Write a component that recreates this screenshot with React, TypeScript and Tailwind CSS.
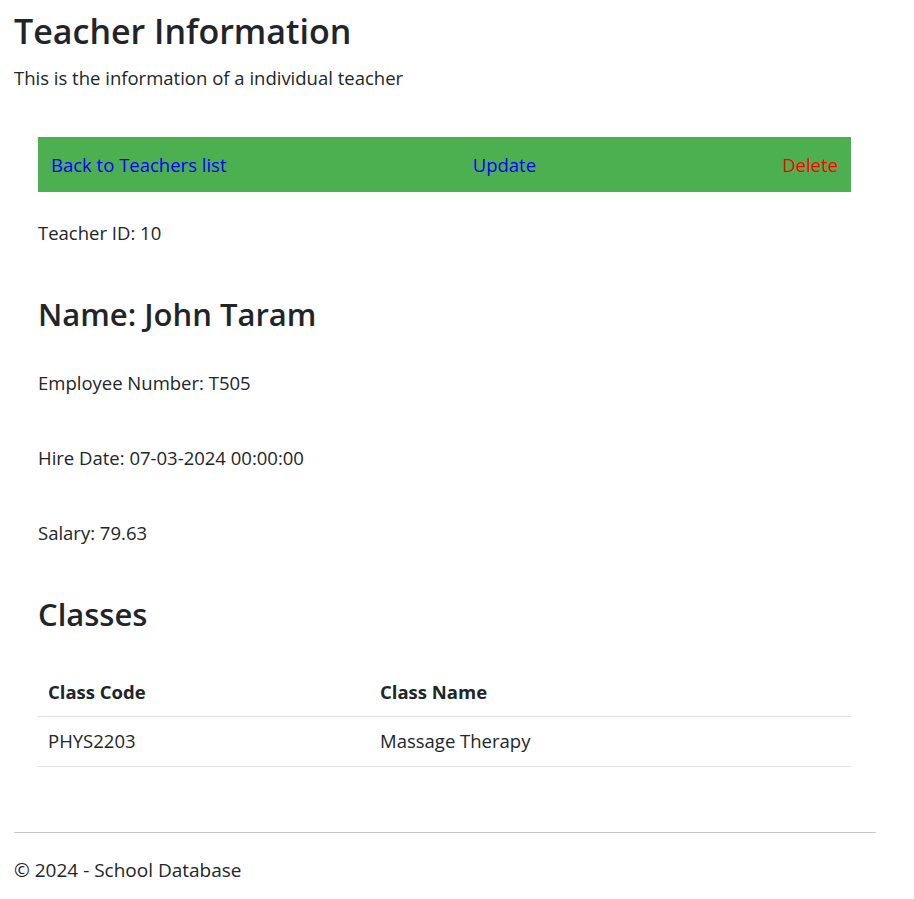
export default function App() {
  return (
    <div className="min-h-screen bg-white pl-[14px] pr-[38px] font-['Open_Sans',sans-serif] text-[#212529]">
      <h1 className="pt-[10px] text-[34px] font-semibold leading-[43px]">Teacher Information</h1>
      <p className="mt-[13px] text-[18.5px] leading-[24px]">This is the information of a individual teacher</p>

      <div className="pl-[24px] pr-[25px]">
        <nav className="mt-[47px] flex h-[55px] items-center justify-between bg-[#4caf50] px-[13px] text-[18.5px]">
          <a href="#" className="text-[#0000ff]">Back to Teachers list</a>
          <a href="#" className="text-[#0000ff]">Update</a>
          <a href="#" className="text-[#ff0000]">Delete</a>
        </nav>

        <p className="mt-[29px] text-[18.5px] leading-[24px]">Teacher ID: 10</p>
        <h2 className="mt-[51px] text-[31px] font-semibold leading-[36px]">Name: John Taram</h2>
        <p className="mt-[39px] text-[18.5px] leading-[24px]">Employee Number: T505</p>
        <p className="mt-[51px] text-[18.5px] leading-[24px]">Hire Date: 07-03-2024 00:00:00</p>
        <p className="mt-[51px] text-[18.5px] leading-[24px]">Salary: 79.63</p>
        <h2 className="mt-[51px] text-[31px] font-semibold leading-[36px]">Classes</h2>

        <table className="mt-[36px] w-full text-left text-[18.5px]">
          <thead>
            <tr className="border-b border-[#dee2e6]">
              <th className="h-[48px] w-[332px] px-[10px] font-bold">Class Code</th>
              <th className="h-[48px] px-[10px] font-bold">Class Name</th>
            </tr>
          </thead>
          <tbody>
            <tr className="border-b border-[#dee2e6]">
              <td className="h-[50px] px-[10px]">PHYS2203</td>
              <td className="h-[50px] px-[10px]">Massage Therapy</td>
            </tr>
          </tbody>
        </table>
      </div>

      <hr className="mt-[65px] border-t border-[#c8c8c8]" />
      <footer className="mt-[25px] text-[19px] leading-[24px]">© 2024 - School Database</footer>
    </div>
  );
}
